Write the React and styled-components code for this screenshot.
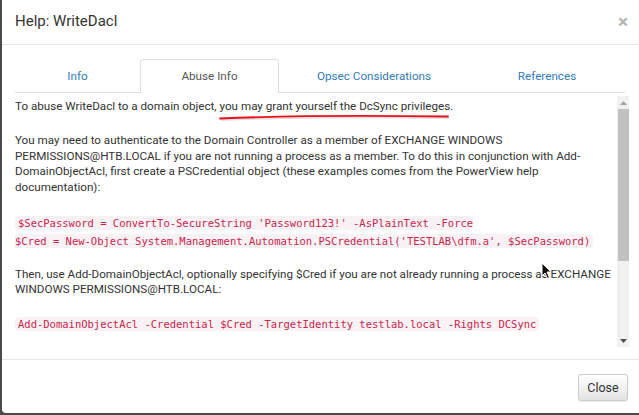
import React from 'react';
import styled, { createGlobalStyle } from 'styled-components';

const GlobalStyle = createGlobalStyle`
  html, body {
    margin: 0;
    padding: 0;
    background: #4b4b4b;
    overflow: hidden;
  }
  body {
    font-family: Roboto, "Liberation Sans", Arial, sans-serif;
    color: #333;
  }
`;

const Modal = styled.div`
  position: relative;
  margin-left: 2px;
  width: 640px;
  height: 413px;
  background: #fff;
  border-radius: 0 0 0 4px;
  display: flex;
  flex-direction: column;
  overflow: hidden;
`;

const Header = styled.div`
  height: 45px;
  box-sizing: border-box;
  border-bottom: 1px solid #e5e5e5;
  display: flex;
  align-items: center;
  justify-content: space-between;
  padding: 0 14px 2px 13px;
`;

const Title = styled.h4`
  margin: 0;
  font-size: 15px;
  font-weight: 400;
  color: #333;
`;

const CloseX = styled.span`
  font-size: 19px;
  font-weight: 700;
  color: #b5b5b5;
  line-height: 1;
`;

const Body = styled.div`
  padding: 14px 13px 12px 13px;
  display: flex;
  flex-direction: column;
`;

const Tabs = styled.div`
  display: flex;
  width: 610px;
  border-bottom: 1px solid #ddd;
  height: 34px;
  box-sizing: border-box;
`;

const Tab = styled.div`
  width: ${p => p.w}px;
  display: flex;
  align-items: center;
  justify-content: center;
  font-size: 11.7px;
  color: ${p => (p.active ? '#555' : '#337ab7')};
  background: ${p => (p.active ? '#fff' : 'transparent')};
  border: 1px solid ${p => (p.active ? '#ddd' : 'transparent')};
  border-bottom: none;
  border-radius: 4px 4px 0 0;
  margin-bottom: -1px;
  box-sizing: border-box;
  padding-bottom: 2px;
`;

const Pane = styled.div`
  display: flex;
  height: 254px;
`;

const Content = styled.div`
  flex: 1;
  overflow: hidden;
  position: relative;
  padding-top: 6px;
  font-size: 11.65px;
  line-height: 15.4px;
`;

const Para = styled.p`
  margin: 0 0 ${p => p.mb || 19}px 0;
`;

const CodeBlock = styled.div`
  margin: ${p => p.mt || 0}px 0 ${p => p.mb || 18}px 0;
  line-height: 17.5px;
`;

const Code = styled.code`
  font-family: "DejaVu Sans Mono", "Liberation Mono", monospace;
  font-size: 10.5px;
  color: #c7254e;
  background: #f9f2f4;
  padding: 1px 3px;
  border-radius: 4px;
`;

const Scrollbar = styled.div`
  width: 12px;
  margin-left: 3px;
  margin-top: 3px;
  background: #f1f1f1;
  display: flex;
  flex-direction: column;
  align-items: center;
`;

const Arrow = styled.div`
  height: 13px;
  display: flex;
  align-items: center;
  justify-content: center;
`;

const Thumb = styled.div`
  width: 11px;
  height: 152px;
  background: #c1c1c1;
`;

const Spacer = styled.div`
  flex: 1;
`;

const Footer = styled.div`
  flex: 1;
  border-top: 1px solid #e5e5e5;
  display: flex;
  align-items: center;
  justify-content: flex-end;
  padding-right: 14px;
  padding-top: 1px;
`;

const Button = styled.button`
  width: 50px;
  height: 27px;
  border: 1px solid #ccc;
  border-radius: 3px;
  background: linear-gradient(#fff, #e3e3e3);
  box-shadow: 0 1px 1px rgba(0, 0, 0, 0.08);
  font-family: Roboto, "Liberation Sans", Arial, sans-serif;
  font-size: 12.5px;
  color: #333;
  padding: 0;
`;

const Annotation = styled.svg`
  position: absolute;
  left: 203px;
  top: 18px;
  pointer-events: none;
`;

const Cursor = styled.svg`
  position: absolute;
  left: 526px;
  top: 169px;
`;

export default function App() {
  return (
    <>
      <GlobalStyle />
      <Modal>
        <Header>
          <Title>Help: WriteDacl</Title>
          <CloseX>×</CloseX>
        </Header>
        <Body>
          <Tabs>
            <Tab w={125}>Info</Tab>
            <Tab w={139} active>Abuse Info</Tab>
            <Tab w={190}>Opsec Considerations</Tab>
            <Tab w={156}>References</Tab>
          </Tabs>
          <Pane>
            <Content>
              <Para>
                To abuse WriteDacl to a domain object, you may grant yourself the DcSync privileges.
              </Para>
              <Para mb={20}>
                You may need to authenticate to the Domain Controller as a member of EXCHANGE WINDOWS
                PERMISSIONS@HTB.LOCAL if you are not running a process as a member. To do this in
                conjunction with Add-DomainObjectAcl, first create a PSCredential object (these
                examples comes from the PowerView help documentation):
              </Para>
              <CodeBlock mt={2} mb={17}>
                <Code>
                  $SecPassword = ConvertTo-SecureString 'Password123!' -AsPlainText -Force
                  <br />
                  $Cred = New-Object System.Management.Automation.PSCredential('TESTLAB\dfm.a', $SecPassword)
                </Code>
              </CodeBlock>
              <Para mb={18}>
                Then, use Add-DomainObjectAcl, optionally specifying $Cred if you are not already
                running a process as EXCHANGE WINDOWS PERMISSIONS@HTB.LOCAL:
              </Para>
              <CodeBlock>
                <Code>
                  Add-DomainObjectAcl -Credential $Cred -TargetIdentity testlab.local -Rights DCSync
                </Code>
              </CodeBlock>
              <Annotation width="240" height="10" viewBox="0 0 240 10">
                <path d="M2 7.5 C 60 5, 150 4.5, 230 5.5" stroke="rgba(0,0,0,0.12)" strokeWidth="2" fill="none" transform="translate(1,1.5)" />
                <path d="M2 7.5 C 60 5, 150 4.5, 230 5.5" stroke="#e8101a" strokeWidth="1.8" fill="none" strokeLinecap="round" />
              </Annotation>
              <Cursor width="12" height="18" viewBox="0 0 12 18">
                <path d="M1 1 L1 14 L4 11 L6.5 16.5 L8.5 15.5 L6 10 L10 10 Z" fill="#111" stroke="#fff" strokeWidth="1" />
              </Cursor>
            </Content>
            <Scrollbar>
              <Arrow>
                <svg width="7" height="4" viewBox="0 0 7 4"><path d="M0 4 L3.5 0 L7 4 Z" fill="#a3a3a3" /></svg>
              </Arrow>
              <Thumb />
              <Spacer />
              <Arrow>
                <svg width="7" height="4" viewBox="0 0 7 4"><path d="M0 0 L3.5 4 L7 0 Z" fill="#505050" /></svg>
              </Arrow>
            </Scrollbar>
          </Pane>
        </Body>
        <Footer>
          <Button>Close</Button>
        </Footer>
      </Modal>
    </>
  );
}
